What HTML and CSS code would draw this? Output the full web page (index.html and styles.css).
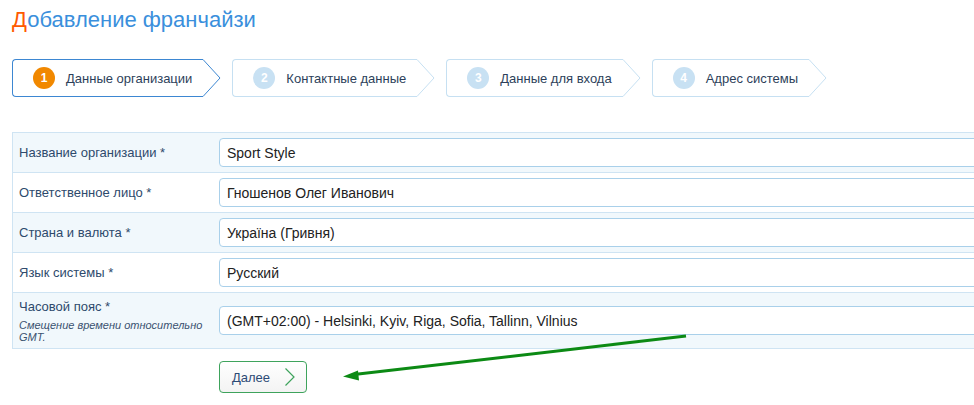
FILE: index.html
```html
<!DOCTYPE html>
<html lang="ru">
<head>
    <meta charset="UTF-8">
    <meta name="viewport" content="width=device-width, initial-scale=1.0">
    <title>Добавление франчайзи</title>
    <link rel="stylesheet" href="styles.css">
</head>
<body>
    <h1 class="page-title"><span class="first-letter">Д</span>обавление франчайзи</h1>

    <div class="steps">
        <div class="step active">
            <div class="step-body"><span class="step-num">1</span>Данные организации</div>
            <svg class="step-tip" width="18" height="38" viewBox="0 0 18 38"><polyline points="0,0.5 17,19 0,37.5" /></svg>
        </div>
        <div class="step">
            <div class="step-body"><span class="step-num">2</span>Контактные данные</div>
            <svg class="step-tip" width="18" height="38" viewBox="0 0 18 38"><polyline points="0,0.5 17,19 0,37.5" /></svg>
        </div>
        <div class="step">
            <div class="step-body"><span class="step-num">3</span>Данные для входа</div>
            <svg class="step-tip" width="18" height="38" viewBox="0 0 18 38"><polyline points="0,0.5 17,19 0,37.5" /></svg>
        </div>
        <div class="step">
            <div class="step-body"><span class="step-num">4</span>Адрес системы</div>
            <svg class="step-tip" width="18" height="38" viewBox="0 0 18 38"><polyline points="0,0.5 17,19 0,37.5" /></svg>
        </div>
    </div>

    <div class="form-wrap">
        <table class="form-table">
            <tr>
                <td class="label-cell">Название организации *</td>
                <td><input type="text" class="field" value="Sport Style"></td>
            </tr>
            <tr>
                <td class="label-cell">Ответственное лицо *</td>
                <td><input type="text" class="field" value="Гношенов Олег Иванович"></td>
            </tr>
            <tr>
                <td class="label-cell">Страна и валюта *</td>
                <td><input type="text" class="field" value="Україна (Гривня)"></td>
            </tr>
            <tr>
                <td class="label-cell">Язык системы *</td>
                <td><input type="text" class="field" value="Русский"></td>
            </tr>
            <tr class="tall">
                <td class="label-cell">Часовой пояс *
                    <div class="hint">Смещение времени относительно GMT.</div>
                </td>
                <td><input type="text" class="field" value="(GMT+02:00) - Helsinki, Kyiv, Riga, Sofia, Tallinn, Vilnius"></td>
            </tr>
        </table>
    </div>

    <div class="actions">
        <button class="next-btn">Далее
            <svg width="12" height="20" viewBox="0 0 12 20"><polyline points="1.5,1.5 10,10 1.5,18.5" /></svg>
        </button>
    </div>

    <!-- annotation arrow -->
    <svg class="annotation" width="974" height="405" viewBox="0 0 974 405">
        <line x1="686" y1="336" x2="354" y2="374.5" />
        <polygon points="343,376.5 358,370.5 359,380.5" />
    </svg>
</body>
</html>
```

FILE: styles.css
```css
body {
    font-family: "Liberation Sans", Arial, sans-serif;
    margin: 0;
    padding: 0 0 0 12px;
    background: #fff;
    overflow: hidden;
    position: relative;
    height: 405px;
}

.page-title {
    font-size: 22px;
    font-weight: normal;
    color: #3a8fdc;
    margin: 0;
    padding-top: 6px;
    line-height: 28px;
}

.first-letter {
    color: #ff5a00;
}

/* wizard steps */
.steps {
    display: flex;
    gap: 11px;
    margin-top: 25px;
}

.step {
    display: flex;
    height: 38px;
}

.step-body {
    display: flex;
    align-items: center;
    border: 1px solid #c6e0f2;
    border-right: none;
    border-radius: 4px 0 0 4px;
    padding-left: 20px;
    padding-right: 11px;
    font-size: 13px;
    color: #2d3f5a;
    background: #fff;
    white-space: nowrap;
}

.step-tip polyline {
    fill: #fff;
    stroke: #c6e0f2;
    stroke-width: 1;
}

.step-num {
    display: inline-flex;
    justify-content: center;
    align-items: center;
    width: 22px;
    height: 22px;
    border-radius: 50%;
    background: #c8e1f3;
    color: #fff;
    font-size: 12px;
    font-weight: bold;
    margin-right: 11px;
}

.step.active .step-body {
    border-color: #3d87d2;
}

.step.active .step-tip polyline {
    stroke: #3d87d2;
}

.step.active .step-num {
    background: #f18800;
}

/* form: runs past the right edge, as on the page */
.form-wrap {
    margin-top: 35px;
    width: calc(100% + 12px);
    overflow: hidden;
}

.form-table {
    width: 1100px;
    border-collapse: collapse;
    border: 1px solid #cfe4f3;
}

.form-table tr {
    border-bottom: 1px solid #cfe4f3;
}

.form-table tr:nth-child(odd) {
    background: #f1f8fc;
}

.form-table td {
    padding: 5px 0;
    height: 29px;
    vertical-align: middle;
}

.label-cell {
    width: 194px;
    padding-left: 6px !important;
    font-size: 13px;
    color: #2e4a6c;
}

.tall .label-cell {
    height: 44px;
    vertical-align: top;
    padding-top: 6px !important;
}

.hint {
    font-size: 11px;
    font-style: italic;
    color: #3a5270;
    margin-top: 5px;
    line-height: 12px;
    width: 188px;
}

.field {
    box-sizing: border-box;
    width: 100%;
    height: 29px;
    margin-left: 6px;
    border: 1px solid #a9d0ea;
    border-radius: 4px;
    padding: 0 8px 0 7px;
    font-family: "Liberation Sans", Arial, sans-serif;
    font-size: 14px;
    color: #222;
    background: #fff;
}

.actions {
    padding-left: 207px;
    margin-top: 12px;
}

.next-btn {
    display: flex;
    align-items: center;
    justify-content: space-between;
    width: 88px;
    height: 32px;
    padding: 0 10px 0 12px;
    border: 1px solid #3ea35c;
    border-radius: 4px;
    background: linear-gradient(#fff, #f3f3f3);
    font-family: "Liberation Sans", Arial, sans-serif;
    font-size: 13px;
    color: #2c4a75;
    cursor: pointer;
}

.next-btn polyline {
    fill: none;
    stroke: #3ea35c;
    stroke-width: 1.2;
}

.annotation {
    position: absolute;
    left: 0;
    top: 0;
    pointer-events: none;
}

.annotation line {
    stroke: #0c8a14;
    stroke-width: 3;
}

.annotation polygon {
    fill: #0c8a14;
}
```
